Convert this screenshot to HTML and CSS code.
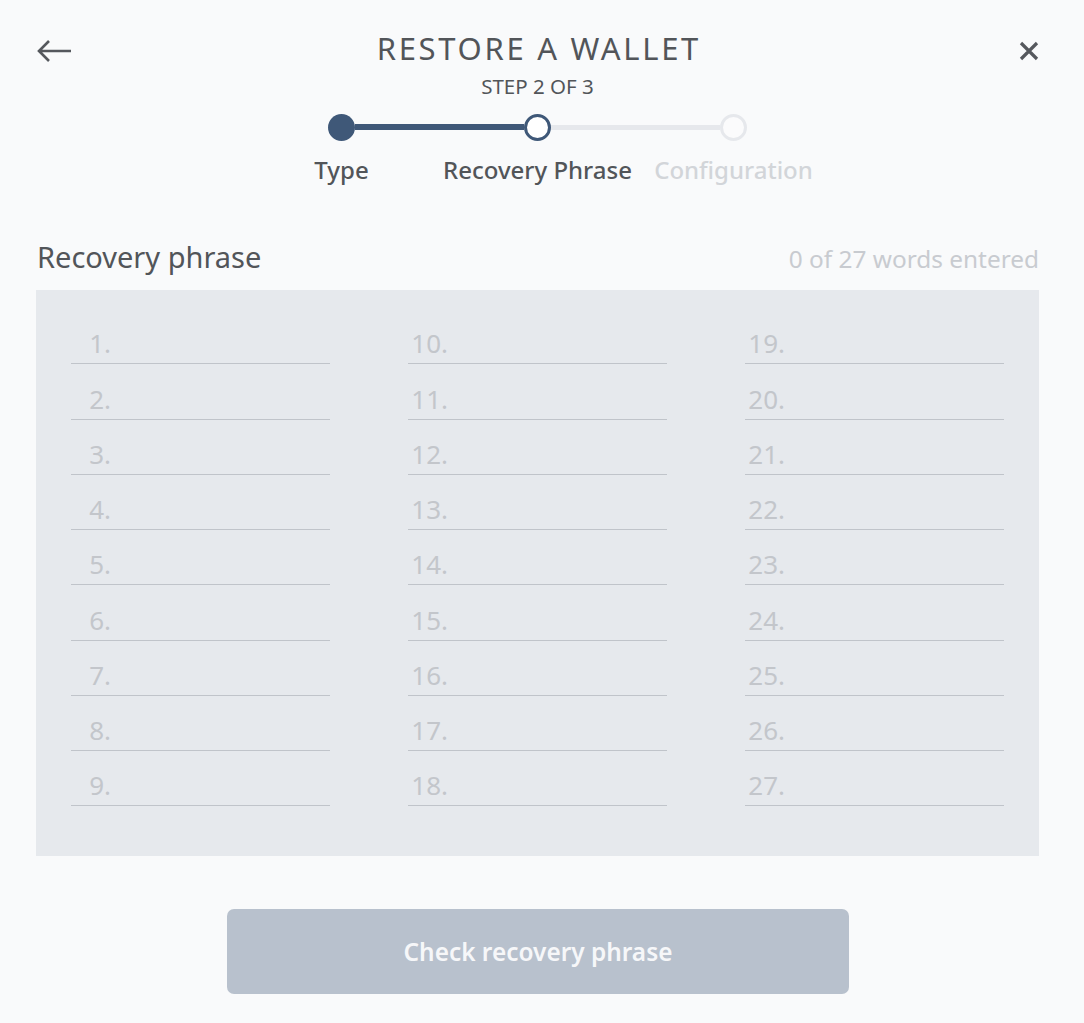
FILE: index.html
```html
<!DOCTYPE html>
<html lang="en">
<head>
<meta charset="utf-8">
<title>Restore a wallet</title>
<link rel="stylesheet" href="styles.css">
</head>
<body>
<div class="page">
  <header class="top">
    <button class="icon-btn back" aria-label="Back">
      <svg width="36" height="24" viewBox="0 0 36 24"><path d="M35 12H3M13 2L3 12l10 10" fill="none" stroke="#55585d" stroke-width="2.6"/></svg>
    </button>
    <div class="titles">
      <h1 class="title">RESTORE A WALLET</h1>
      <div class="step-count">STEP 2 OF 3</div>
    </div>
    <button class="icon-btn close" aria-label="Close">
      <svg width="20" height="20" viewBox="0 0 20 20"><path d="M2 2L18 18M18 2L2 18" fill="none" stroke="#55585d" stroke-width="3.2"/></svg>
    </button>
  </header>

  <div class="stepper">
    <div class="step done">
      <div class="track"><span class="half none"></span><span class="dot filled"></span><span class="half active"></span></div>
      <div class="step-label">Type</div>
    </div>
    <div class="step current">
      <div class="track"><span class="half active"></span><span class="dot ring"></span><span class="half idle"></span></div>
      <div class="step-label">Recovery Phrase</div>
    </div>
    <div class="step todo">
      <div class="track"><span class="half idle"></span><span class="dot ring-idle"></span><span class="half none"></span></div>
      <div class="step-label muted">Configuration</div>
    </div>
  </div>

  <div class="phrase-head">
    <h2 class="phrase-title">Recovery phrase</h2>
    <div class="phrase-count">0 of 27 words entered</div>
  </div>

  <div class="words" id="words"></div>

  <div class="actions">
    <button class="check-btn" disabled>Check recovery phrase</button>
  </div>
</div>
<script>
  var w = document.getElementById('words');
  for (var i = 1; i <= 27; i++) {
    var d = document.createElement('div');
    d.className = 'word';
    d.innerHTML = '<span class="num">' + i + '.</span>';
    w.appendChild(d);
  }
</script>
</body>
</html>
```
FILE: styles.css
```css
* { box-sizing: border-box; }
html, body { margin: 0; padding: 0; }
body {
  background: #f9fafb;
  font-family: "Noto Sans", "Open Sans", sans-serif;
  color: #55585d;
  width: 1084px;
  height: 1023px;
  overflow: hidden;
}
.page {
  padding: 0 45px 0 36px;
}
.top {
  display: grid;
  grid-template-columns: 1fr auto 1fr;
  align-items: start;
  padding-top: 30px;
}
.icon-btn {
  background: none;
  border: 0;
  padding: 0;
  display: flex;
  cursor: pointer;
}
.back { margin-top: 9px; justify-self: start; }
.close { margin-top: 11px; justify-self: end; }
.titles {
  display: flex;
  flex-direction: column;
  align-items: center;
}
.title {
  margin: 0 -2.7px 0 0;
  font-size: 31px;
  font-weight: 400;
  letter-spacing: 2.7px;
  line-height: 36px;
  color: #525559;
}
.step-count {
  margin-top: 8px;
  font-size: 20.5px;
  line-height: 24px;
  color: #525559;
}
.stepper {
  display: flex;
  justify-content: center;
  margin-top: 15px;
}
.step {
  width: 196px;
  display: flex;
  flex-direction: column;
  align-items: center;
}
.track {
  width: 100%;
  display: flex;
  align-items: center;
  height: 28px;
}
.half { flex: 1; height: 6px; }
.half.active { background: #3f5878; }
.half.idle { background: #e6e8ec; height: 5px; }
.half.none { background: transparent; }
.dot {
  width: 27px;
  height: 27px;
  border-radius: 50%;
  flex: none;
}
.dot.filled { background: #3f5878; }
.dot.ring { border: 3px solid #3f5878; background: #ffffff; }
.dot.ring-idle { border: 3px solid #e6e8ec; background: #fbfbfc; }
.step-label {
  margin-top: 14px;
  font-size: 24px;
  font-weight: 500;
  line-height: 30px;
  white-space: nowrap;
  color: #525559;
}
.step-label.muted { color: #d2d5d9; }
.phrase-head {
  display: flex;
  justify-content: space-between;
  align-items: baseline;
  margin-top: 54px;
  padding: 0 0 0 1px;
}
.phrase-title {
  margin: 0;
  font-size: 29px;
  font-weight: 400;
  line-height: 36px;
  color: #525559;
}
.phrase-count {
  font-size: 24.4px;
  color: #c8cbd0;
}
.words {
  margin-top: 15px;
  background: #e6e9ed;
  padding: 19px 35px 50px;
  display: grid;
  grid-template-columns: repeat(3, 259px);
  grid-auto-flow: column;
  grid-template-rows: repeat(9, 55.25px);
  justify-content: space-between;
}
.word {
  border-bottom: 1.5px solid #c0c4ca;
  display: flex;
  align-items: flex-end;
  padding: 0 0 3px 0;
}
.num {
  width: 40px;
  text-align: right;
  font-size: 26px;
  line-height: 34px;
  color: #c3c6cb;
}
.actions {
  display: flex;
  justify-content: center;
  padding-top: 53px;
  padding-left: 1px;
}
.check-btn {
  width: 622px;
  height: 85px;
  border: 0;
  border-radius: 7px;
  background: #b8c1cd;
  color: #f6f7f9;
  font-family: "Noto Sans", "Open Sans", sans-serif;
  font-size: 24.4px;
  font-weight: 600;
}
```
